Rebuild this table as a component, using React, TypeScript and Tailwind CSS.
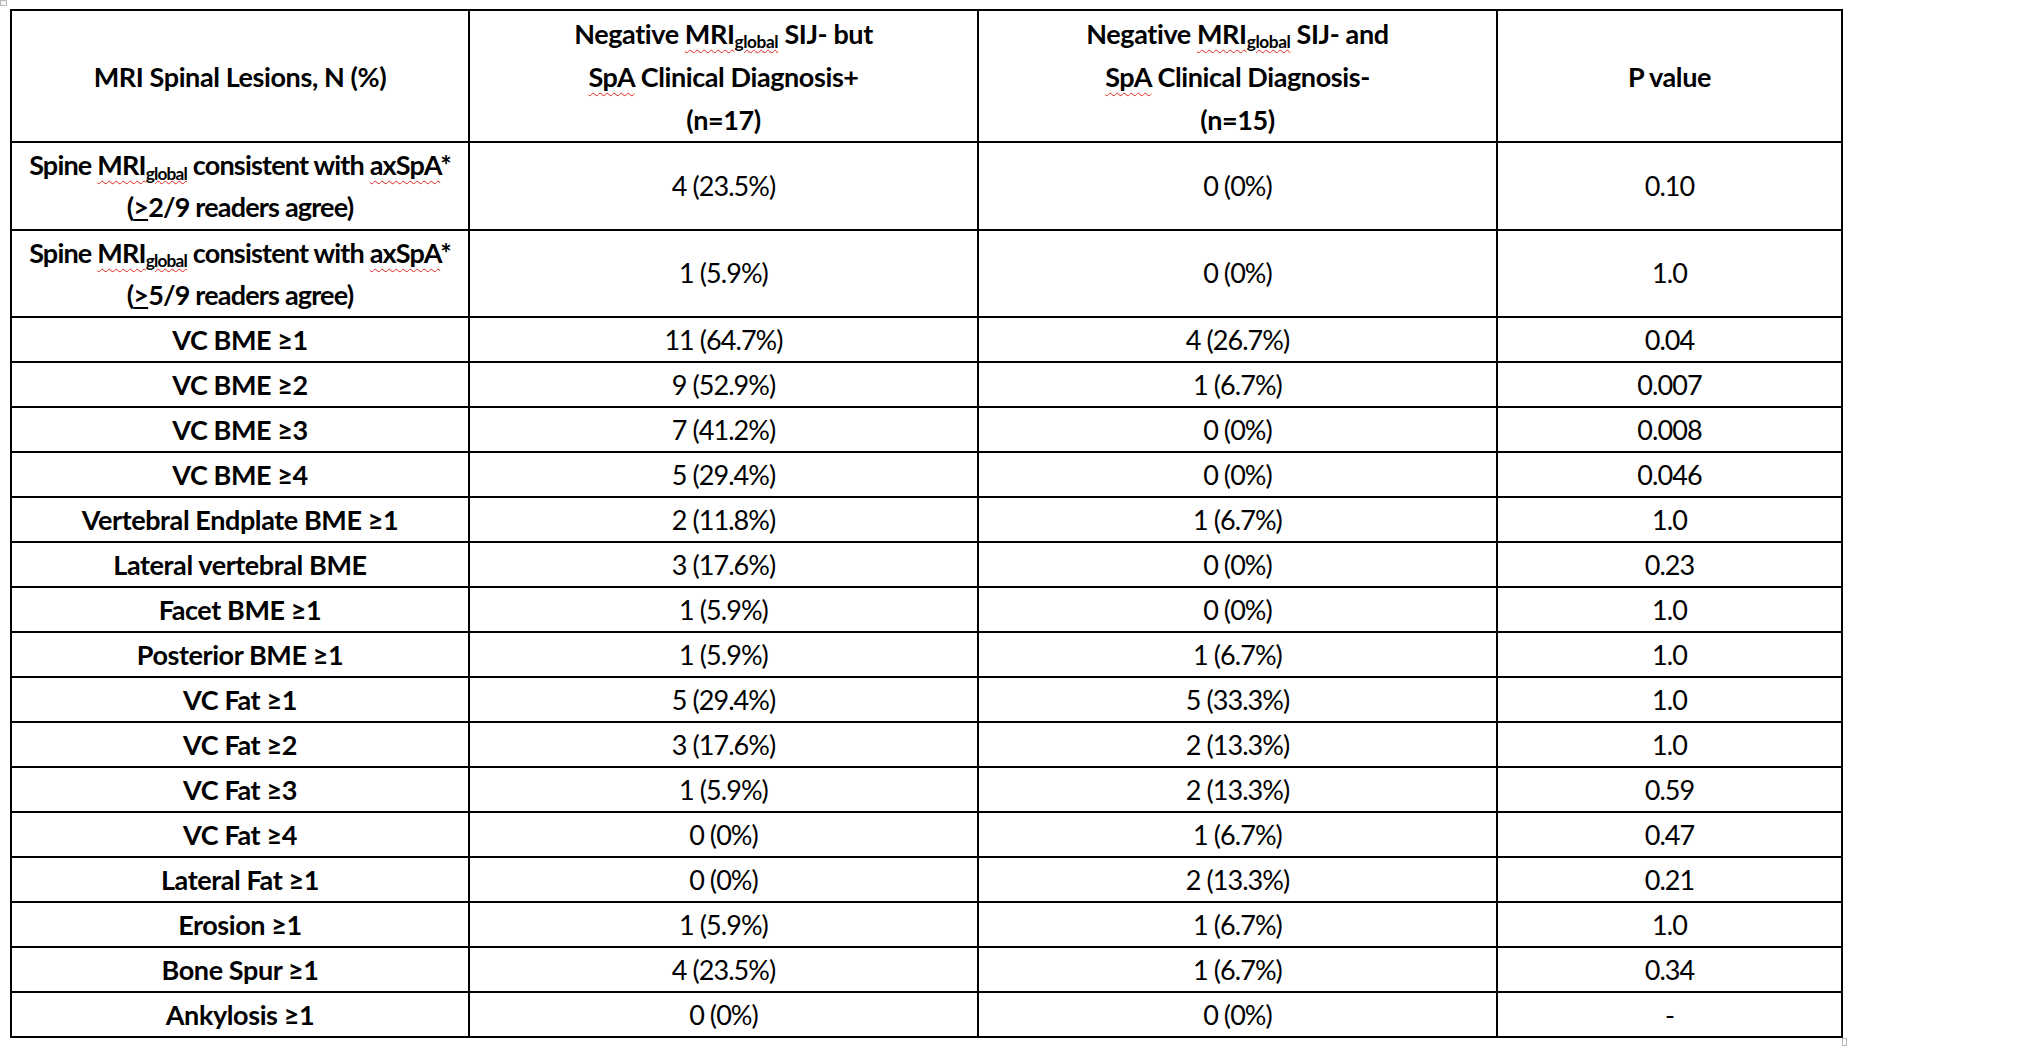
import React from 'react';

type Row = {
    label: string;
    pos: string;
    neg: string;
    p: string;
};

const rows: Row[] = [
    { label: 'VC BME ≥1', pos: '11 (64.7%)', neg: '4 (26.7%)', p: '0.04' },
    { label: 'VC BME ≥2', pos: '9 (52.9%)', neg: '1 (6.7%)', p: '0.007' },
    { label: 'VC BME ≥3', pos: '7 (41.2%)', neg: '0 (0%)', p: '0.008' },
    { label: 'VC BME ≥4', pos: '5 (29.4%)', neg: '0 (0%)', p: '0.046' },
    { label: 'Vertebral Endplate BME ≥1', pos: '2 (11.8%)', neg: '1 (6.7%)', p: '1.0' },
    { label: 'Lateral vertebral BME', pos: '3 (17.6%)', neg: '0 (0%)', p: '0.23' },
    { label: 'Facet BME ≥1', pos: '1 (5.9%)', neg: '0 (0%)', p: '1.0' },
    { label: 'Posterior BME ≥1', pos: '1 (5.9%)', neg: '1 (6.7%)', p: '1.0' },
    { label: 'VC Fat ≥1', pos: '5 (29.4%)', neg: '5 (33.3%)', p: '1.0' },
    { label: 'VC Fat ≥2', pos: '3 (17.6%)', neg: '2 (13.3%)', p: '1.0' },
    { label: 'VC Fat ≥3', pos: '1 (5.9%)', neg: '2 (13.3%)', p: '0.59' },
    { label: 'VC Fat ≥4', pos: '0 (0%)', neg: '1 (6.7%)', p: '0.47' },
    { label: 'Lateral Fat ≥1', pos: '0 (0%)', neg: '2 (13.3%)', p: '0.21' },
    { label: 'Erosion ≥1', pos: '1 (5.9%)', neg: '1 (6.7%)', p: '1.0' },
    { label: 'Bone Spur ≥1', pos: '4 (23.5%)', neg: '1 (6.7%)', p: '0.34' },
    { label: 'Ankylosis ≥1', pos: '0 (0%)', neg: '0 (0%)', p: '-' },
];

// red spell-check squiggle, like Word draws it
const Squiggle: React.FC<{ children: React.ReactNode }> = ({ children }) => (
    <span className="underline decoration-wavy decoration-[#e0231c] decoration-1 underline-offset-[5px]">{children}</span>
);

const MriGlobal: React.FC = () => (
    <Squiggle>
        MRI<span className="relative top-[0.28em] text-[0.64em] leading-[0]">global</span>
    </Squiggle>
);

const SpineLabel: React.FC<{ n: string }> = ({ n }) => (
    <>
        Spine <MriGlobal /> consistent with <Squiggle>axSpA</Squiggle>*
        <br />
        (<span className="underline underline-offset-2">&gt;</span>{n}/9 readers agree)
    </>
);

const cell = 'border-2 border-black text-center align-middle p-0 whitespace-nowrap';
const num = `${cell} tracking-[-0.035em]`;

export default function App() {
    return (
        <div className="relative w-[2036px] h-[1046px] bg-white text-black font-['Lato',sans-serif] text-[27px] tracking-[-0.015em]">
            {/* Word table handles */}
            <div className="absolute left-0 top-0 w-[7px] h-[6px] border border-[#b8b8b8] bg-[#f4f4f4]" />
            <div className="absolute left-[1842px] top-[1038px] w-[5px] h-[8px] border border-[#b8b8b8] bg-white" />

            <div className="pl-[10px] pt-[9px]">
                <table className="border-collapse table-fixed w-[1831px]">
                    <colgroup>
                        <col className="w-[458px]" />
                        <col className="w-[509px]" />
                        <col className="w-[519px]" />
                        <col className="w-[345px]" />
                    </colgroup>
                    <thead>
                        <tr className="h-[132px] font-bold leading-[43px]">
                            <th className={cell}>MRI Spinal Lesions, N (%)</th>
                            <th className={cell}>
                                Negative <MriGlobal /> SIJ- but
                                <br />
                                <Squiggle>SpA</Squiggle> Clinical Diagnosis+
                                <br />
                                (n=17)
                            </th>
                            <th className={cell}>
                                Negative <MriGlobal /> SIJ- and
                                <br />
                                <Squiggle>SpA</Squiggle> Clinical Diagnosis-
                                <br />
                                (n=15)
                            </th>
                            <th className={cell}>P value</th>
                        </tr>
                    </thead>
                    <tbody>
                        <tr className="h-[88px]">
                            <td className={`${cell} font-bold leading-[42px] tracking-[-0.03em]`}><SpineLabel n="2" /></td>
                            <td className={num}>4 (23.5%)</td>
                            <td className={num}>0 (0%)</td>
                            <td className={num}>0.10</td>
                        </tr>
                        <tr className="h-[87px]">
                            <td className={`${cell} font-bold leading-[42px] tracking-[-0.03em]`}><SpineLabel n="5" /></td>
                            <td className={num}>1 (5.9%)</td>
                            <td className={num}>0 (0%)</td>
                            <td className={num}>1.0</td>
                        </tr>
                        {rows.map(row => (
                            <tr key={row.label} className="h-[45px] leading-[38px]">
                                <td className={`${cell} font-bold`}>{row.label}</td>
                                <td className={num}>{row.pos}</td>
                                <td className={num}>{row.neg}</td>
                                <td className={num}>{row.p}</td>
                            </tr>
                        ))}
                    </tbody>
                </table>
            </div>
        </div>
    );
}
